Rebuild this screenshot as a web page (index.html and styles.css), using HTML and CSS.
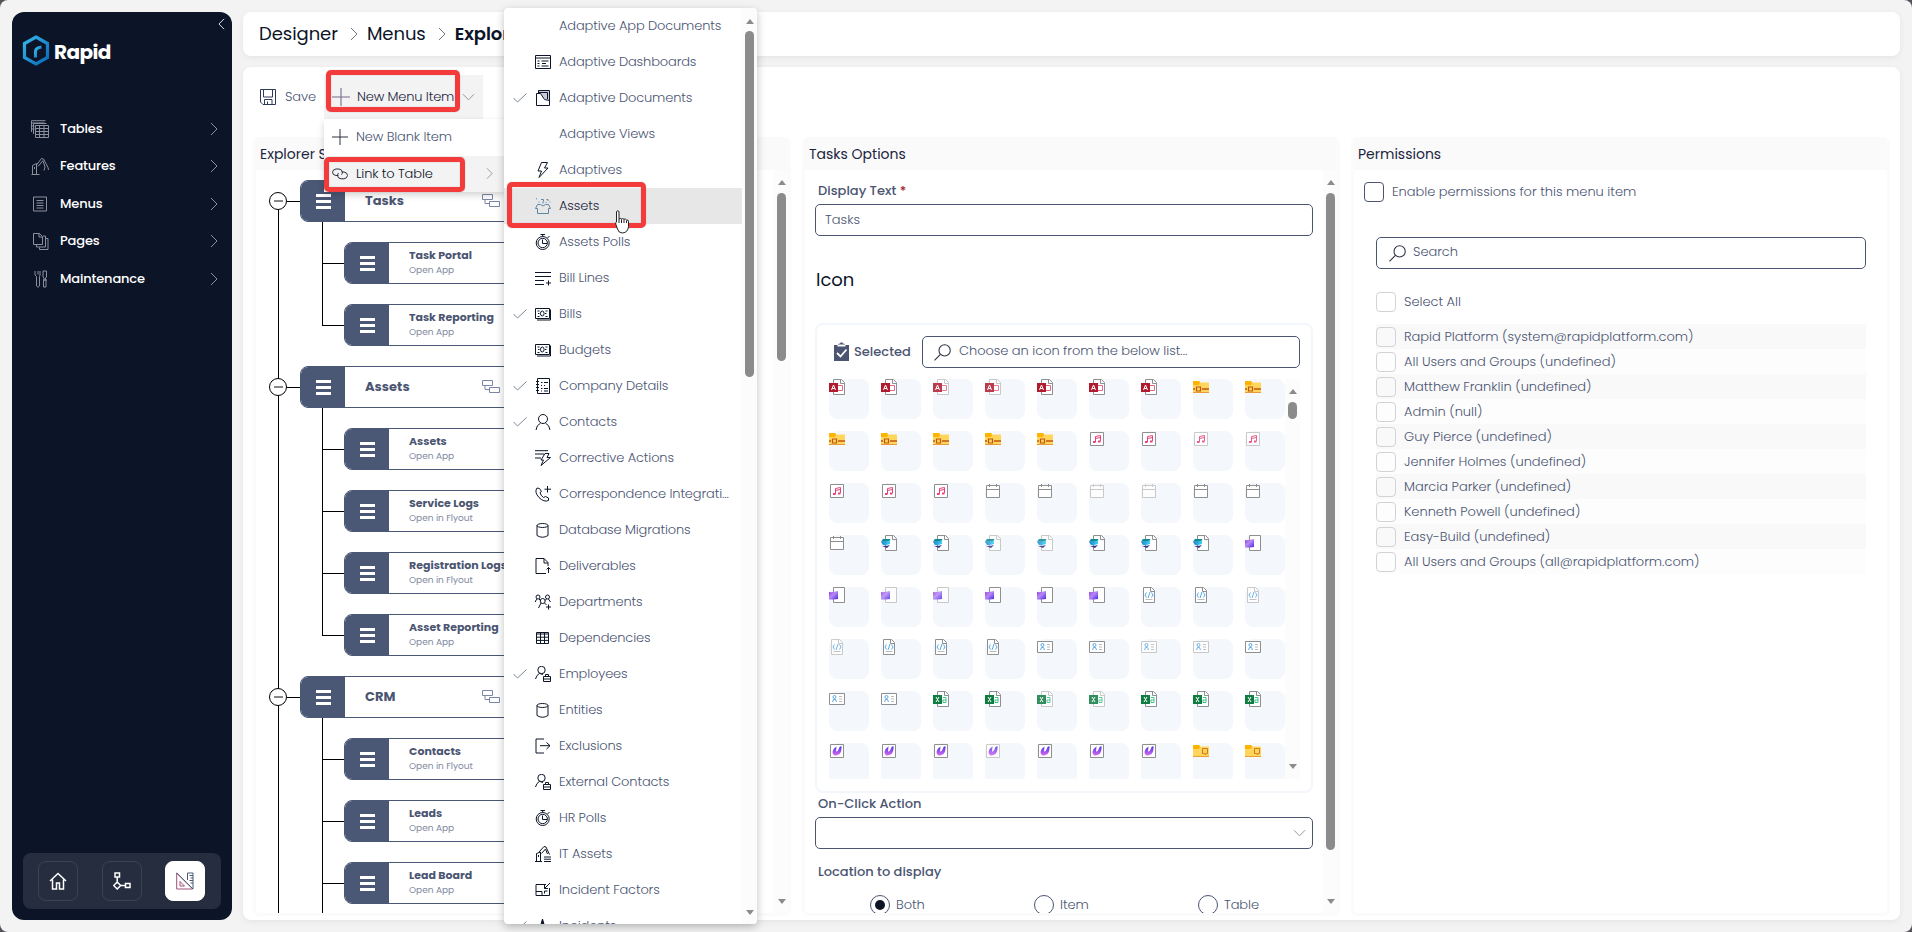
FILE: index.html
```html
<!DOCTYPE html>
<html lang="en">
<head>
<meta charset="utf-8">
<title>Rapid Designer</title>
<link rel="stylesheet" href="styles.css">
</head>
<body>
<svg class="sprite" aria-hidden="true">
  <defs>
    <linearGradient id="gBlue" x1="0" y1="0" x2="1" y2="1"><stop offset="0" stop-color="#35b8ea"/><stop offset="1" stop-color="#0a67b8"/></linearGradient>
    <linearGradient id="gCyan" x1="0" y1="0" x2="1" y2="0"><stop offset="0" stop-color="#1b7fd4"/><stop offset="1" stop-color="#3fd4ec"/></linearGradient>
    <linearGradient id="gViolet" x1="0" y1="0" x2="1" y2="1"><stop offset="0" stop-color="#8a35d8"/><stop offset=".45" stop-color="#b98af5"/><stop offset="1" stop-color="#4a26e8"/></linearGradient>
    <linearGradient id="gLoop" x1="0" y1="0" x2="0" y2="1"><stop offset="0" stop-color="#4a35e0"/><stop offset="1" stop-color="#d868f4"/></linearGradient>
  </defs>
  <symbol id="chev-r" viewBox="0 0 8 14"><path d="M1 1l6 6-6 6"/></symbol>
  <symbol id="chev-d" viewBox="0 0 14 8"><path d="M1 1l6 6 6-6"/></symbol>
  <symbol id="plus" viewBox="0 0 16 16"><path d="M8 0v16M0 8h16"/></symbol>
  <symbol id="check" viewBox="0 0 14 10"><path d="M.5 5l4 4L13.500.5"/></symbol>
  <symbol id="search" viewBox="0 0 16 16"><circle cx="10" cy="6" r="5.300"/><path d="M6 9.700L.5 15.500"/></symbol>
  <symbol id="link" viewBox="0 0 16 12"><path d="M6.500 7.500H4Q.5 7 .5 4.200 1 1.200 4 1h3q3 .3 3.500 3.200 0 1.500-1 2.500M9.500 4h2.500q3.500.5 3.500 3.500-.5 3-3.500 3.300H9Q5.800 10.500 5.500 7.500q0-1.500 1-2.500"/></symbol>
  <symbol id="flow" viewBox="0 0 18 13"><path d="M.5.5h10v5H.5zM7.500 7.500h10v5h-10zM3 5.500v4h4.500"/></symbol>
  <symbol id="save" viewBox="0 0 16 16"><path d="M.5.5h15v15H3L.5 13zM3.500.5v7.500h9V.5M4.500 15.500v-5h7.500v5M7.500 15v-2.500"/></symbol>

  <symbol id="tables" viewBox="0 0 18 18"><path d="M4.500 5.500h13v12h-13zM4.500 8.500h13M4.500 11.500h13M4.500 14.500h13M8.500 5.500v12M13 5.500v12M2.500 14V3.500h13M.5 12V.7h14M.5 3h13M.5 6h3M.5 9h3"/></symbol>
  <symbol id="crane" viewBox="0 0 18 18"><path d="M.5 17.500h8M1.500 17.500V8.500l4-2v11M5.500 8l5-6.500 2 .5 4.500 8.500M7 9.500l5-6M12 4l2 6M14 10l-1 3.500M17 10.500l.5 2.500M3.500 10v2"/></symbol>
  <symbol id="menus" viewBox="0 0 18 18"><path d="M2.500 2h13v14h-13zM5.500 5.500h7M5.500 8h7M5.500 10.500h7M5.500 13h7"/></symbol>
  <symbol id="pages" viewBox="0 0 18 18"><path d="M2.500 1.500h6l3 3v8h-9zM8 1.500v3.500h3.500M12 4h2.500v11h-9v-2M15 6.500h2v11H8.500v-2"/></symbol>
  <symbol id="tools" viewBox="0 0 18 18"><path d="M4 1v4l1.500 1.500v9.500q1.500 2.500 3 0V6.500L9 5V1M7 1v3.500M12 1h3.500v6l-1 1v2h-1.500V8l-1-1zM12 10h4M12.500 10v7h2.500v-7"/></symbol>
  <symbol id="home" viewBox="0 0 18 18"><path d="M1 9l8-7.500L17 9M3.500 7.500v9.500h4v-6h3v6h4V7.500"/></symbol>
  <symbol id="nodes" viewBox="0 0 18 18"><path d="M2 1h4.500v4H2zM4.200 5v5M4.200 10l3.500 3.500L4.200 17 .7 13.500zM7.700 13.500h4.500M12.500 11.500H17v4h-4.500z"/></symbol>
  <symbol id="ruler" viewBox="0 0 18 18"><path d="M.7 1v16h16zM4 9.500v4.500h4.500z" stroke="#a0507a"/><path d="M11.500 8V1h5.500v16L.7 1M13.500 3.500H17M14.500 6H17M13.500 8.500H17M14.500 11H17" stroke="#4b5875"/></symbol>

  <symbol id="m-dash" viewBox="0 0 16 16"><path d="M.5 1.500h15v13H.5zM.5 4h15M2.500 7h2M2.500 9.500h2M2.500 12h2M6.500 7h7M6.500 12h7M7 9.500h4"/></symbol>
  <symbol id="m-doc" viewBox="0 0 16 16"><path d="M3.500 3V.5h11v12M4 2.500h8.500V9" fill="#c9ccd6"/><path d="M1.500 3.500v12h13v-5l-5-1-4-6z" fill="#fff"/></symbol>
  <symbol id="m-bolt" viewBox="0 0 16 16"><path d="M6.500.5h6L9.500 6H13L4 15.500 6.500 9H3z"/></symbol>
  <symbol id="m-asset" viewBox="0 0 16 16"><path d="M2.500 15.500v-5h-2l2-4h3q2.500 3 5 0h3l2 4h-2v5zM8 5.500v-2M6 1.500h2.500v2M1 .8h1M3.500 4h1M11.500 1.500h1.500v1.500M14.500 4h.8M10.500 4.500h1"/></symbol>
  <symbol id="m-watch" viewBox="0 0 16 16"><circle cx="7.700" cy="9" r="6.500"/><circle cx="7.700" cy="9" r="4.700"/><path d="M5.500.5h4.500M7.700.5v2M12.500 4l2-2M7.500 5.500v4H12"/></symbol>
  <symbol id="m-lines" viewBox="0 0 16 16"><path d="M0 2.500h16M0 6.500h16M0 10.500h9M0 14.500h9M13.500 10.500v5M11 13h5"/></symbol>
  <symbol id="m-cash" viewBox="0 0 16 16"><path d="M.5 2.500h14v10H.5zM15.500 3.500v10.500H2M2.500 5h2M10.500 5h2M2.500 10.500h2M10.500 10.500h2M3 7.500h1.500M10 7.500h1.500"/><ellipse cx="7.300" cy="7.500" rx="1.800" ry="2.500"/></symbol>
  <symbol id="m-company" viewBox="0 0 16 16"><path d="M2.500.5h12v15h-12zM1 3.500h3M1 6.500h3M1 9.500h3M1 12.500h3M6 4.500h1.500M6 10.500h1.500M9 4.500h4M9 10.500h4M9 7.500h1M6 7.500h1M6 13h1M9 13h4"/></symbol>
  <symbol id="m-person" viewBox="0 0 16 16"><circle cx="8" cy="5" r="4.500"/><path d="M1 16q.5-5 4.500-6.800M15 16q-.5-5-4.500-6.800"/></symbol>
  <symbol id="m-action" viewBox="0 0 16 16"><path d="M0 .7h13M0 4h9M0 8h6M10 3.500h4l-2 4h3.500L6 15.500l2.500-5.500H6z"/></symbol>
  <symbol id="m-phone" viewBox="0 0 16 16"><path d="M4.500 2.500L2 2Q-1 6 4 11.500q5 5 9.500 3V12l-3-1.500-2 1q-3-2-3.500-5l1.500-1zM12.500 0v6.500M9.500 3.200h6.500"/></symbol>
  <symbol id="m-db" viewBox="0 0 16 16"><path d="M2 3.500v10q5.500 3.500 11 0v-10"/><ellipse cx="7.500" cy="3.500" rx="5.500" ry="2"/></symbol>
  <symbol id="m-deliv" viewBox="0 0 16 16"><path d="M11 15.500H1V.5h8l4 4V8M9 .5v4.500h4M13.500 15V9.500M11.500 11.500l2-2 2 2"/></symbol>
  <symbol id="m-dept" viewBox="0 0 16 16"><circle cx="3" cy="3" r="2"/><circle cx="12.500" cy="3" r="2"/><circle cx="7.700" cy="7" r="2.500"/><path d="M.5 8V7L2 5M4 5l1.500 1.500M11.500 5L10 6.500M13.500 5l2 3M3.500 14l2.500-5M11.500 11l-2-2M13.500 10.500v5M11 13h5"/></symbol>
  <symbol id="m-grid" viewBox="0 0 16 16"><path d="M1.500 2.500h12v11h-12zM1.500 4h12M1.500 7.200h12M1.500 10.400h12M5.500 3v10.500M9.500 3v10.500"/></symbol>
  <symbol id="m-emp" viewBox="0 0 16 16"><circle cx="6.500" cy="4" r="3.700"/><path d="M.5 13q1-4 4-5.700L8 8.500M8.500 10.500h7v5h-7zM10.500 10.500v-2h3v2M8.500 13h7"/></symbol>
  <symbol id="m-exit" viewBox="0 0 16 16"><path d="M9 1H1v14h8M5 7.700h10M11.500 4.500l3.500 3.200-3.500 3.300"/></symbol>
  <symbol id="m-crane" viewBox="0 0 16 16"><path d="M0 15.500h7M1.500 15.500v-8l4-1.500v9.500M4 6l5-5.500 2 .5 3.500 7.500M6.500 7.500L10.500 3l2 5M3.500 9v2M9 11h7M9 13.200h7M9 15.500h7"/></symbol>
  <symbol id="m-fact" viewBox="0 0 16 16"><path d="M11 2.500H1v11h13.500V6M1 9.500h6v4M15 1L9.500 6.500M9.500 3v3.500H13M9.500 11.500V9h3"/></symbol>
  <symbol id="m-inc" viewBox="0 0 16 16"><path d="M7.500 1l4 14h-8z" fill="#0c1427"/></symbol>

  <symbol id="t-access" viewBox="0 0 16 16"><path d="M4.500.5h8l3 3v12h-11z" fill="#fff" stroke="currentColor"/><path d="M11.500.5v4h4" fill="none" stroke="currentColor"/><path d="M9 6.500h4.500v5H9" fill="none" stroke="#e06a86"/><path d="M0 4h9v9H0z" fill="#b01c2e"/><path d="M2.500 11l2-5 2 5M3.200 9.500h2.600" fill="none" stroke="#fff"/></symbol>
  <symbol id="t-zip" viewBox="0 0 16 16"><path d="M0 2h6l1.500 1.500H16V14H0z" fill="#ffd55c"/><path d="M0 2h6l1 1.500L6 6H0z" fill="#fdb400"/><path d="M0 13.500h16" stroke="#e69a3a"/><path d="M9 10h7M0 10h2" stroke="#c2560f" stroke-width="1.600"/><path d="M3.500 8h4v4h-4z" fill="none" stroke="#c2560f" stroke-width="1.200"/></symbol>
  <symbol id="t-music" viewBox="0 0 16 16"><path d="M1.500 1.500h13v13h-13z" fill="#fff" stroke="currentColor"/><path d="M6.500 11V5.500l5-1V10M6.500 7.500l5-1" fill="none" stroke="#e8417a"/><path d="M4 10h2.500v2H4zM9 9.500h2.500v2H9z" fill="#e8417a"/></symbol>
  <symbol id="t-cal" viewBox="0 0 16 16"><path d="M1.500 2.500h13v12h-13zM1.500 6.500h13M4.500 1v3M11.500 1v3" fill="#fff" stroke="currentColor"/></symbol>
  <symbol id="t-teal" viewBox="0 0 16 16"><path d="M4.500.5h8l3 3v12h-11z" fill="#fff" stroke="currentColor"/><path d="M11.500.5v4h4" fill="none" stroke="currentColor"/><path d="M2 4h7.500L8 6.800H0z" fill="#0f8a94"/><path d="M0 6.800q4 0 9-1.300v3.500q-4 1.500-7 1z" fill="url(#gCyan)"/><path d="M.5 10.800q4 .8 8.500-.8L6 13z" fill="#3a2f86"/></symbol>
  <symbol id="t-violet" viewBox="0 0 16 16"><path d="M4.500.5h11v15h-11z" fill="#fff" stroke="currentColor"/><path d="M0 5q4 .5 9-1v8q-4 .5-9 .5z" fill="url(#gViolet)"/></symbol>
  <symbol id="t-code" viewBox="0 0 16 16"><path d="M2.500.5h8l3 3v12h-11z" fill="#fff" stroke="currentColor"/><path d="M9.500.5v4h4" fill="none" stroke="currentColor"/><path d="M5.500 5.500L4 8l1.500 2.500M10.500 5.500L12 8l-1.500 2.500M9 5l-2 6" fill="none" stroke="#5aa9e6"/><path d="M4.500 12.500h7" stroke="#bbb"/></symbol>
  <symbol id="t-card" viewBox="0 0 16 16"><path d="M.5 2.500h15v11H.5z" fill="#fff" stroke="currentColor"/><circle cx="5.500" cy="6" r="1.500" fill="none" stroke="#5aa9e6"/><path d="M3.500 11l1-2.500h2l1 2.500" fill="none" stroke="#5aa9e6"/><path d="M10 5.500h3M10 8h3M10 10.500h3" stroke="#bbb"/></symbol>
  <symbol id="t-excel" viewBox="0 0 16 16"><path d="M4.500.5h8l3 3v12h-11z" fill="#fff" stroke="currentColor"/><path d="M11.500.5v4h4" fill="none" stroke="currentColor"/><path d="M10 6.500h3v5h-3V9h3" fill="none" stroke="#3fc28a"/><path d="M0 4h9v9H0z" fill="#107c41"/><path d="M3 6l3 5M6 6l-3 5" stroke="#fff"/></symbol>
  <symbol id="t-loop" viewBox="0 0 16 16"><path d="M1.500 1.500h13v13h-13z" fill="#fff" stroke="currentColor"/><path d="M3.500 9Q4.500 5 7.500 3.500L7 8.500q1.500.5 2.500-2L10.500 4 12.500 3q.5 5-2 8-2.500 2-5.500 1.300Q3.500 11 3.500 9z" fill="url(#gLoop)"/></symbol>
  <symbol id="t-folder" viewBox="0 0 16 16"><path d="M0 2h6l1.500 1.500H16V14H0z" fill="#ffd55c"/><path d="M0 2h6l1 1.500L6 6H0z" fill="#fdb400"/><path d="M0 13.500h16" stroke="#e8a030"/><path d="M9.500 5.500h5v5h-1.500v1l-2-1h-1.500z" fill="none" stroke="#d07a1a"/></symbol>
</svg>

<div class="app">
  <aside class="sidebar">
    <div class="collapse"><svg class="ico flip" width="7" height="12"><use href="#chev-r"/></svg></div>
    <div class="brand">
      <svg width="28" height="31" viewBox="0 0 28 31" fill="none" stroke="url(#gBlue)"><path d="M14 2l11.500 6.500v14L14 29 2.500 22.500v-14z" stroke-width="3.200"/><path d="M13.500 22.500v-6q0-3.500 6-4.500" stroke-width="3"/></svg>
      <span>Rapid</span>
    </div>
    <nav class="nav" id="nav"></nav>
    <div class="dock">
      <span class="dock-btn"><svg class="ico" width="18" height="18"><use href="#home"/></svg></span>
      <span class="dock-btn"><svg class="ico" width="18" height="18"><use href="#nodes"/></svg></span>
      <span class="dock-btn active"><svg class="ico" width="18" height="18"><use href="#ruler"/></svg></span>
    </div>
  </aside>

  <main class="main">
    <header class="crumbs">
      <span>Designer</span><svg class="ico" width="8" height="14"><use href="#chev-r"/></svg>
      <span>Menus</span><svg class="ico" width="8" height="14"><use href="#chev-r"/></svg>
      <b>Explorer</b>
    </header>

    <section class="card">
      <div class="toolbar">
        <div class="tool"><svg class="ico" width="16" height="16"><use href="#save"/></svg><span>Save</span></div>
        <div class="tool open"><svg class="ico" width="18" height="18"><use href="#plus"/></svg><span>New Menu Item</span><svg class="ico muted" width="13" height="8"><use href="#chev-d"/></svg></div>
      </div>

      <div class="panels">
        <section class="panel">
          <h2>Explorer Structure</h2>
          <div class="panel-body">
            <div class="tree" id="tree"></div>
            <div class="scroll side"><i class="up"></i><i class="thumb short"></i><i class="down"></i></div>
          </div>
        </section>

        <section class="panel">
          <h2>Tasks Options</h2>
          <div class="panel-body">
            <div class="form">
              <label class="lbl first">Display Text <em>*</em></label>
              <div class="field"><span class="txt">Tasks</span></div>
              <h3>Icon</h3>
              <div class="picker">
                <div class="picker-head">
                  <svg width="15" height="20" viewBox="0 0 15 20"><path d="M0 3h4V2l2-.5Q7.500-1 9 1.500l2 .5v1h4v16H0z" fill="#4b5572"/><path d="M3.500 3.500h8M3 11l3.500 3.500 6-7" fill="none" stroke="#fff" stroke-width="1.800"/></svg>
                  <b>Selected</b>
                  <div class="field grow"><svg class="ico" width="17" height="17"><use href="#search"/></svg><span class="txt">Choose an icon from the below list...</span></div>
                </div>
                <div class="picker-body">
                  <div class="tiles" id="tiles"></div>
                  <div class="scroll mini"><i class="up"></i><i class="thumb"></i><i class="down"></i></div>
                </div>
              </div>
              <label class="lbl action">On-Click Action</label>
              <div class="field select"><svg class="ico muted" width="13" height="8"><use href="#chev-d"/></svg></div>
              <label class="lbl location">Location to display</label>
              <div class="radios">
                <span class="radio on"><i></i><span>Both</span></span><span class="radio"><i></i><span>Item</span></span><span class="radio"><i></i><span>Table</span></span>
              </div>
            </div>
            <div class="scroll side"><i class="up"></i><i class="thumb long"></i><i class="down"></i></div>
          </div>
        </section>

        <section class="panel">
          <h2>Permissions</h2>
          <div class="perms">
            <div class="chk strong"><i></i><span>Enable permissions for this menu item</span></div>
            <div class="field find"><svg class="ico" width="17" height="17"><use href="#search"/></svg><span class="txt">Search</span></div>
            <div class="chk all"><i></i><span>Select All</span></div>
            <div class="users" id="users"></div>
          </div>
        </section>
      </div>
    </section>
  </main>

  <div class="dropdown">
    <div class="drop-row"><svg class="ico" width="16" height="16"><use href="#plus"/></svg><span>New Blank Item</span></div>
    <div class="drop-row hover"><svg class="ico" width="16" height="12"><use href="#link"/></svg><span>Link to Table</span><svg class="ico muted" width="7" height="13"><use href="#chev-r"/></svg></div>
  </div>

  <div class="submenu">
    <div class="sub-list" id="submenu"></div>
    <div class="scroll sub"><i class="up"></i><i class="thumb"></i><i class="down"></i></div>
  </div>

  <div class="mark mark-new"></div>
  <div class="mark mark-link"></div>
  <div class="mark mark-assets"></div>
  <svg class="cursor" width="15" height="24" viewBox="0 0 15 24"><path d="M1.500 1.500Q3 0 4 1.500V9q1-1.200 2.500 0 1.200-1 2.500.3 1.500-1 2.500.7 2-.5 2 1.500v5q-.5 6-6 6.500-4 0-5-4L.7 14Q.5 12 1.500 12z" fill="#fff" stroke="#222"/><path d="M4 9v4M6.500 9.300V13M9 9.600V13M11.500 10.500V13" stroke="#222"/></svg>
</div>
<script src="app.js"></script>
</body>
</html>
```
FILE: styles.css
```css
* { box-sizing: border-box; }
body { margin: 0; background: #55525a; font-family: Poppins, Inter, "Noto Sans", sans-serif; font-size: 13px; font-weight: 300; color: #4b5572; }
h2, h3 { margin: 0; font-weight: 400; }
i, em { font-style: normal; }
.sprite { position: absolute; width: 0; height: 0; }
.ico { fill: none; stroke: currentColor; stroke-width: 1; flex: none; display: block; overflow: visible; }
.flip { transform: scaleX(-1); }
.muted { color: #8a8f9c; }

.app { position: relative; display: flex; gap: 11px; width: 1912px; height: 932px; padding: 12px; background: #f3f3f3; border-radius: 8px; overflow: hidden; }

/* Sidebar */
.sidebar { width: 220px; height: 908px; padding: 0 11px 11px; border-radius: 12px; background: #0c1427; color: #fff; display: flex; flex-direction: column; }
.collapse { display: flex; justify-content: flex-end; height: 23px; margin-right: -7px; padding: 6px 3px 0 0; }
.brand { display: flex; align-items: center; gap: 4px; height: 31px; margin-left: -1px; font-size: 20px; font-weight: 700; letter-spacing: -.6px; }
.brand span { padding-top: 2px; }
.nav { margin-top: 32px; padding: 12px 3px 0 8px; flex: 1; }
.nav-row { display: flex; align-items: center; height: 37.500px; font-size: 13px; font-weight: 500; letter-spacing: -.15px; }
.nav-row .ico { color: #8c909b; }
.nav-row span { flex: 1; margin-left: 11px; }
.dock { height: 56px; border-radius: 8px; background: #252d3f; display: flex; align-items: center; gap: 24px; padding-left: 15px; }
.dock-btn { width: 40px; height: 40px; border-radius: 8px; border: 1px solid #3a4254; display: grid; place-items: center; }
.dock-btn .ico { stroke-width: 1.500; }
.dock-btn.active { background: #fff; border-color: #fff; margin-left: -1px; }
.dock-btn.active .ico { stroke-width: 1; }

/* Main column */
.main { width: 1657px; display: flex; flex-direction: column; gap: 11px; }
.crumbs { height: 44px; border-radius: 8px; background: #fff; box-shadow: 0 2px 6px rgba(0,0,0,.06); display: flex; align-items: center; padding: 0 16px 2px; font-size: 18px; font-weight: 400; letter-spacing: -.05px; color: #0c1427; }
.crumbs .ico { color: #777; margin: 2px 9px 0 12px; }
.crumbs b { font-weight: 600; letter-spacing: -.1px; }
.card { height: 853px; border-radius: 8px; background: #fff; box-shadow: 0 2px 6px rgba(0,0,0,.06); padding: 8px 10px 4px; display: flex; flex-direction: column; }
.toolbar { display: flex; height: 62px; }
.tool { display: flex; align-items: center; height: 44px; padding: 0 9px 0 7px; width: 71px; }
.tool span { margin-left: 9px; letter-spacing: -.1px; }
.tool .ico:first-child { color: #2f3a58; }
.tool.open { width: 159px; background: #f3f3f3; color: #1c2540; padding: 0 8px; }
.tool.open span { margin: 0 7px 0 7px; width: 98px; white-space: nowrap; letter-spacing: -.15px; }
.tool.open .ico:first-child { color: #7a6a8c; }
.panels { display: grid; grid-template-columns: 538px 538px 539px; column-gap: 11px; }
.panel { height: 779px; border: 3px solid #fbfbfb; border-top: 0; border-radius: 6px; overflow: hidden; }
.panel h2 { height: 33px; line-height: 34px; padding-left: 4px; background: #fafafa; font-size: 14px; color: #1c2540; }
.panel-body { display: flex; justify-content: space-between; height: 743px; overflow: hidden; }

/* Scrollbars */
.scroll { width: 15px; flex: none; background: #fcfcfc; display: flex; flex-direction: column; align-items: center; }
.scroll .up { border: 4.500px solid transparent; border-top: 0; border-bottom: 5px solid #8b8b8b; }
.scroll .down { border: 4.500px solid transparent; border-bottom: 0; border-top: 5px solid #8b8b8b; margin-top: auto; }
.scroll .thumb { width: 9px; border-radius: 5px; background: #8b8b8b; }
.side { padding: 10px 0 9px; margin-right: -1px; }
.side .thumb { margin-top: 8px; }
.thumb.short { height: 168px; }
.thumb.long { height: 657px; }

/* Menu tree */
.tree { position: relative; width: 450px; }
.tree::before { content: ""; position: absolute; left: 22px; top: 31px; bottom: 0; width: 1px; background: #000; }
.tree-row { position: relative; display: flex; align-items: center; height: 62px; padding-left: 13px; }
.toggle { width: 18px; height: 18px; border: 1px solid #000; border-radius: 50%; background: #fff; display: grid; place-items: center; z-index: 1; }
.toggle::after { content: ""; width: 9px; height: 1.500px; background: #888; }
.stem { width: 13px; height: 1px; background: #000; }
.tree-row.child { padding-left: 66px; }
.tree-row.child .stem { width: 22px; }
.tree-row.child::before { content: ""; position: absolute; left: 66px; top: -10px; height: 72px; width: 1px; background: #000; }
.tree-row.child.last::before { height: 41px; }
.node { position: relative; display: flex; width: 400px; height: 42px; border: 1px solid #4b5875; border-radius: 8px; background: #fff; overflow: hidden; color: #4b5572; }
.child .node { width: 356px; }
.grip { width: 44px; background: #4b5875; display: flex; flex-direction: column; justify-content: center; gap: 3px; padding: 1px 0 0 15px; }
.grip i { width: 15px; height: 3px; background: #fff; }
.node-text { margin-left: 20px; width: 117px; display: flex; flex-direction: column; justify-content: center; white-space: nowrap; }
.node-text b { font-size: 13px; font-weight: 700; }
.child .node-text { padding-bottom: 2px; }
.child .node-text b { font-size: 11px; line-height: 15px; }
.child .node-text small { font-size: 9px; line-height: 14px; font-weight: 400; color: #8189a0; }
.node > .ico { margin-top: 13px; color: #7c86a6; }

/* Options form */
.form { padding: 12px 0 0 10px; width: 508px; flex: none; }
.lbl { display: block; padding-left: 3px; font-weight: 500; color: #4b5572; font-size: 13px; height: 18px; line-height: 18px; }
.lbl em { color: #a4262c; }
.field { height: 32px; border: 1px solid #4b5572; border-radius: 5px; background: #fff; display: flex; align-items: center; padding: 0 9px; }
.first + .field { margin-top: 4px; }
.txt { padding-bottom: 1px; }
.field .ico { color: #2c3040; margin-right: 7px; }
.field .ico + .txt { padding-bottom: 2px; letter-spacing: -.05px; }
.form h3 { font-size: 18px; color: #0c1427; line-height: 24px; margin: 32px 0 31px 1px; }
.picker { height: 470px; border: 2px solid #f3f6fb; border-radius: 8px; padding: 11px 11px 0 12px; }
.picker-head { display: flex; align-items: center; height: 32px; padding-left: 5px; }
.picker-head b { width: 68px; margin-left: 5px; font-size: 13px; font-weight: 500; color: #4b5572; }
.grow { flex: 1; padding-left: 11px; }
.grow .ico { margin-right: 8px; }
.picker-body { display: flex; margin-top: 11px; height: 400px; overflow: hidden; }
.tiles { display: grid; grid-template-columns: repeat(9, 1fr); column-gap: 11.500px; row-gap: 12px; width: 456px; align-content: start; }
.tile { height: 40px; border-radius: 8px; background: #f4f7fc; color: #8f8f8f; }
.tile svg { display: block; }
.tile.dim { color: #c2c2c2; }
.tile.dim svg { opacity: .85; }
.mini { padding: 10px 0; }
.mini .thumb { height: 17px; margin-top: 8px; }
.lbl.action { margin: 2px 0 4px; }
.select { justify-content: flex-end; padding: 0; }
.select .ico { color: #8a8f9c; margin-right: 6px; }
.lbl.location { margin-top: 14px; }
.radios { display: flex; margin-top: 14px; padding-left: 55px; }
.radio { width: 164px; flex: none; display: flex; align-items: center; gap: 6px; height: 20px; }
.radio:last-child { width: 100px; }
.radio i { width: 20px; height: 20px; border: 1px solid #4b5572; border-radius: 50%; display: grid; place-items: center; }
.radio.on i::after { content: ""; width: 10px; height: 10px; border-radius: 50%; background: #0c1427; }
.radio span { line-height: 16px; padding-bottom: 1px; letter-spacing: -.1px; }

/* Permissions */
.perms { padding: 12px 21px 0 22px; }
.chk { display: flex; align-items: center; height: 20px; gap: 8px; letter-spacing: -.02px; }
.chk i { width: 20px; height: 20px; border: 1px solid #d3d3d6; border-radius: 4px; }
.chk.strong { margin-left: -12px; }
.chk.strong i { border-color: #4b5572; }
.find { margin-top: 35px; padding-left: 12px; }
.chk.all { margin: 23px 0 12px; }
.user { height: 25px; background: #fdfdfd; }
.user:nth-child(odd) { background: #f9f9f9; }

/* Flyout menus */
.dropdown { position: absolute; left: 324px; top: 119px; width: 181px; height: 73px; background: #fff; box-shadow: 0 3px 7px rgba(0,0,0,.18); border-radius: 3px; font-size: 13px; letter-spacing: -.13px; }
.drop-row { display: flex; align-items: center; height: 36.500px; padding: 0 12px 0 8px; gap: 8px; }
.drop-row span { flex: 1; }
.drop-row.hover { background: #f3f3f3; color: #0c1427; }
.drop-row .ico { color: #2c3040; }
.drop-row .muted { color: #8a8f9c; }
.submenu { position: absolute; left: 504px; top: 8px; width: 253px; height: 916px; background: #fff; border-radius: 4px; box-shadow: 0 3px 8px rgba(0,0,0,.25); display: flex; overflow: hidden; letter-spacing: -.14px; }
.sub-list { width: 238px; }
.sub-row { display: grid; grid-template-columns: 14px 16px 160px; column-gap: 8px; align-items: center; height: 36px; padding-left: 9px; }
.sub-row span { white-space: nowrap; overflow: hidden; text-overflow: ellipsis; width: 172px; line-height: 20px; }
.sub-row .ico { color: #0c1427; }
.sub-row .ico.tick { color: #7d869c; }
.sub-row.hover { background: #e7e7e7; color: #1c2540; }
.sub-row.hover .ico { color: #5e87a6; }
.sub { padding: 11px 0 9px; }
.sub .thumb { height: 346px; margin-top: 7px; }

/* Highlight frames and pointer */
.mark { position: absolute; border: 5px solid #f43b3c; border-radius: 5px; box-shadow: 0 0 1px rgba(90,90,90,.6), inset 0 0 1px rgba(90,90,90,.6); }
.mark-new { left: 326px; top: 70px; width: 134px; height: 42px; }
.mark-link { left: 324px; top: 157px; width: 141px; height: 35px; }
.mark-assets { left: 507px; top: 182px; width: 139px; height: 46px; }
.cursor { position: absolute; left: 615px; top: 210px; }
```
FILE: app.js
```javascript
const icon = (id, w, h, cls = "ico") => `<svg class="${cls}" width="${w}" height="${h}"><use href="#${id}"/></svg>`;
const fill = (id, html) => { document.getElementById(id).innerHTML = html; };

fill("nav", [["Tables", "tables"], ["Features", "crane"], ["Menus", "menus"], ["Pages", "pages"], ["Maintenance", "tools"]]
  .map(([t, i]) => `<div class="nav-row">${icon(i, 18, 18)}<span>${t}</span>${icon("chev-r", 8, 14)}</div>`).join(""));

const grip = '<div class="grip"><i></i><i></i><i></i></div>';
const tree = [
  ["Tasks", [["Task Portal", "Open App"], ["Task Reporting", "Open App"]]],
  ["Assets", [["Assets", "Open App"], ["Service Logs", "Open in Flyout"], ["Registration Logs", "Open in Flyout"], ["Asset Reporting", "Open App"]]],
  ["CRM", [["Contacts", "Open in Flyout"], ["Leads", "Open App"], ["Lead Board", "Open App"]]]
];
fill("tree", tree.map(([name, kids], g) =>
  `<div class="tree-row"><span class="toggle"></span><span class="stem"></span><div class="node">${grip}<div class="node-text"><b>${name}</b></div>${icon("flow", 18, 13)}</div></div>` +
  kids.map(([t, s], k) => {
    const last = k === kids.length - 1 && g < tree.length - 1;
    return `<div class="tree-row child${last ? " last" : ""}"><span class="stem"></span><div class="node">${grip}<div class="node-text"><b>${t}</b><small>${s}</small></div></div></div>`;
  }).join("")).join(""));

// Each entry: icon name, then one flag per tile (1 = faded variant).
const runs = [["access", "0011000"], ["zip", "0000000"], ["music", "0011000"], ["cal", "0011000"], ["teal", "0011000"],
  ["violet", "0011000"], ["code", "0011000"], ["card", "0011000"], ["excel", "0011000"], ["loop", "0001000"], ["folder", "00"]];
fill("tiles", runs.map(([n, flags]) => [...flags]
  .map(f => `<div class="tile${f === "1" ? " dim" : ""}">${icon("t-" + n, 16, 16, "")}</div>`).join("")).join(""));

fill("users", ["Rapid Platform (system@rapidplatform.com)", "All Users and Groups (undefined)", "Matthew Franklin (undefined)", "Admin (null)",
  "Guy Pierce (undefined)", "Jennifer Holmes (undefined)", "Marcia Parker (undefined)", "Kenneth Powell (undefined)",
  "Easy-Build (undefined)", "All Users and Groups (all@rapidplatform.com)"]
  .map(u => `<div class="chk user"><i></i><span>${u}</span></div>`).join(""));

const items = [["Adaptive App Documents", ""], ["Adaptive Dashboards", "dash"], ["Adaptive Documents", "doc", 1], ["Adaptive Views", ""],
  ["Adaptives", "bolt"], ["Assets", "asset"], ["Assets Polls", "watch"], ["Bill Lines", "lines"], ["Bills", "cash", 1], ["Budgets", "cash"],
  ["Company Details", "company", 1], ["Contacts", "person", 1], ["Corrective Actions", "action"], ["Correspondence Integrations", "phone"],
  ["Database Migrations", "db"], ["Deliverables", "deliv"], ["Departments", "dept"], ["Dependencies", "grid"], ["Employees", "emp", 1],
  ["Entities", "db"], ["Exclusions", "exit"], ["External Contacts", "emp"], ["HR Polls", "watch"], ["IT Assets", "crane"],
  ["Incident Factors", "fact"], ["Incidents", "inc", 1]];
fill("submenu", items.map(([t, i, on]) =>
  `<div class="sub-row${t === "Assets" ? " hover" : ""}">${on ? icon("check", 14, 10, "ico tick") : "<i></i>"}${i ? icon("m-" + i, 16, 16) : "<i></i>"}<span>${t}</span></div>`).join(""));
```
